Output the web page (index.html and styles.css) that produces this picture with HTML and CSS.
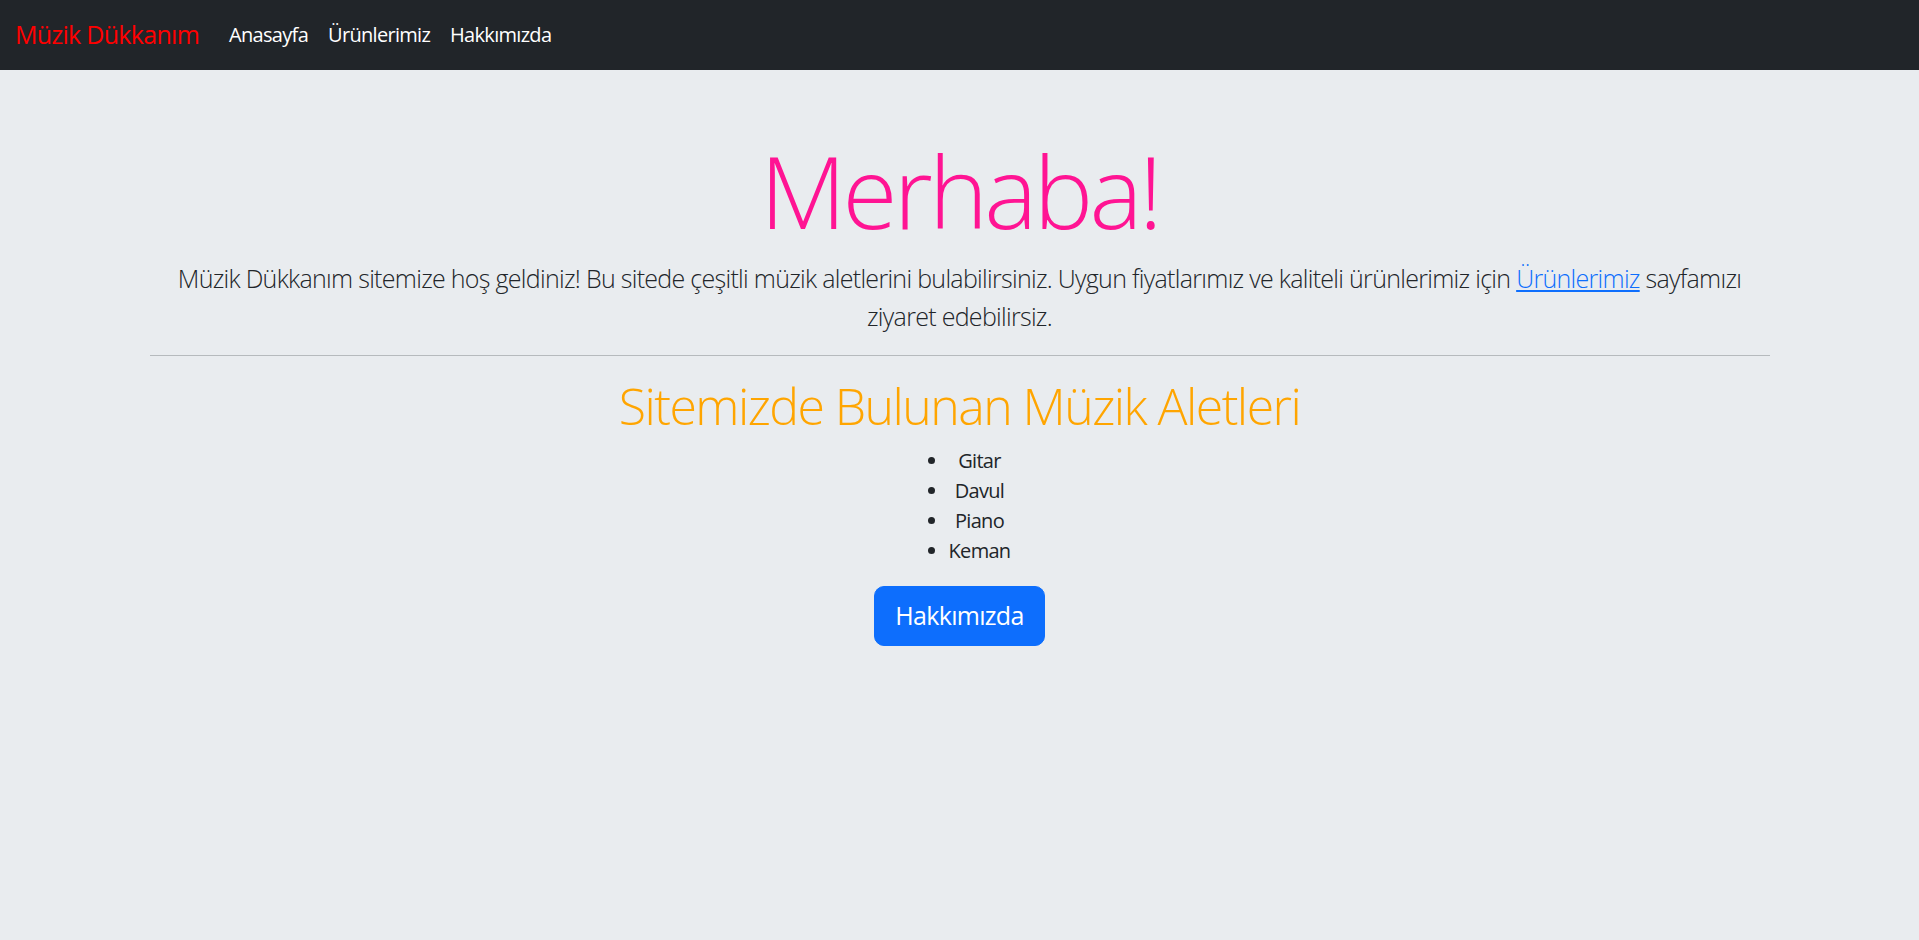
FILE: index.html
```html
<!DOCTYPE html>
<html lang="tr">
<head>
<meta charset="utf-8">
<title>Müzik Dükkanım</title>
<link rel="stylesheet" href="styles.css">
</head>
<body>
<nav class="navbar">
  <a class="brand" href="#">Müzik Dükkanım</a>
  <ul class="nav-links">
    <li><a href="#">Anasayfa</a></li>
    <li><a href="#">Ürünlerimiz</a></li>
    <li><a href="#">Hakkımızda</a></li>
  </ul>
</nav>
<main class="container">
  <h1 class="hello">Merhaba!</h1>
  <p class="lead">Müzik Dükkanım sitemize hoş geldiniz! Bu sitede çeşitli müzik aletlerini bulabilirsiniz. Uygun fiyatlarımız ve kaliteli ürünlerimiz için <a href="#">Ürünlerimiz</a> sayfamızı ziyaret edebilirsiz.</p>
  <hr class="divider">
  <h2 class="subtitle">Sitemizde Bulunan Müzik Aletleri</h2>
  <ul class="instruments">
    <li>Gitar</li>
    <li>Davul</li>
    <li>Piano</li>
    <li>Keman</li>
  </ul>
  <button class="btn-primary" type="button">Hakkımızda</button>
</main>
</body>
</html>
```

FILE: styles.css
```css
* { box-sizing: border-box; }

body {
  margin: 0;
  background: #e9ecef;
  color: #212529;
  font-family: "Open Sans", "Noto Sans", sans-serif;
  font-size: 20px;
  line-height: 30px;
  letter-spacing: -0.7px;
}

.navbar {
  background: #212529;
  display: flex;
  align-items: center;
  padding: 10px 15px;
}

.brand {
  color: #ff0000;
  font-size: 25px;
  line-height: 37.5px;
  padding: 6px 0;
  margin-right: 20px;
  text-decoration: none;
}

.nav-links {
  list-style: none;
  display: flex;
  margin: 0;
  padding: 0;
}

.nav-links a {
  display: block;
  color: #ffffff;
  text-decoration: none;
  padding: 10px 10px;
  font-size: 20px;
  line-height: 30px;
}

.container {
  width: 1650px;
  margin: 0 auto;
  padding: 0 15px;
  text-align: center;
}

.hello {
  margin: 60px 0 10px;
  font-size: 100px;
  line-height: 120px;
  font-weight: 300;
  letter-spacing: -3.7px;
  color: #ff1493;
}

.lead {
  margin: 0 0 20px;
  font-size: 25px;
  line-height: 37.5px;
  font-weight: 300;
}

.lead a {
  color: #0d6efd;
}

.divider {
  margin: 20px 0;
  border: 0;
  border-top: 1px solid #212529;
  opacity: 0.25;
}

.subtitle {
  margin: 0 0 10px;
  font-size: 50px;
  line-height: 60px;
  font-weight: 300;
  letter-spacing: -1.55px;
  color: #ffa500;
}

.instruments {
  width: fit-content;
  margin: 0 auto 20px;
  padding-left: 40px;
}

.btn-primary {
  font-family: inherit;
  letter-spacing: inherit;
  font-size: 25px;
  line-height: 37.5px;
  padding: 10px 20px;
  color: #ffffff;
  background: #0d6efd;
  border: 1px solid #0d6efd;
  border-radius: 10px;
}
```
